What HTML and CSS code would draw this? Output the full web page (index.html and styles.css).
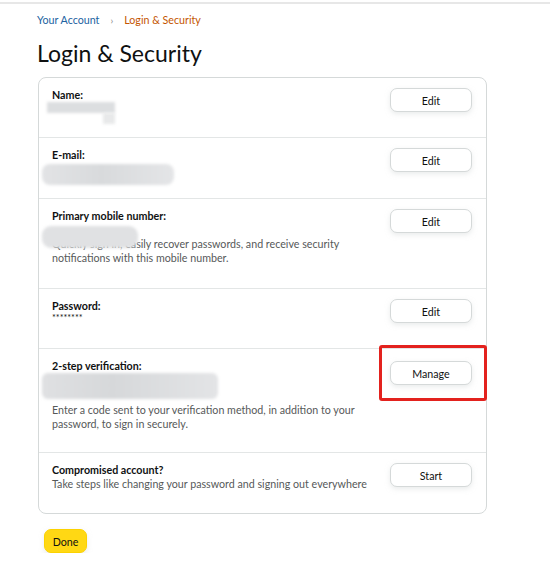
FILE: index.html
```html
<!DOCTYPE html>
<html lang="en">
<head>
<meta charset="utf-8">
<title>Login &amp; Security</title>
<link rel="stylesheet" href="styles.css">
</head>
<body>
<div class="topline"></div>
<main class="page">
  <nav class="crumbs">
    <a class="crumb-link" href="#">Your Account</a>
    <span class="crumb-sep">›</span>
    <span class="crumb-current">Login &amp; Security</span>
  </nav>
  <h1 class="title">Login &amp; Security</h1>

  <section class="card">
    <div class="row row-name">
      <div class="info">
        <div class="label">Name:</div>
        <div class="blur blur-name"></div>
        <div class="blur blur-name2"></div>
      </div>
      <button class="btn">Edit</button>
    </div>

    <div class="row row-email">
      <div class="info">
        <div class="label">E-mail:</div>
        <div class="blur blur-email"></div>
      </div>
      <button class="btn">Edit</button>
    </div>

    <div class="row row-mobile">
      <div class="info">
        <div class="label">Primary mobile number:</div>
        <div class="blur blur-mobile"></div>
        <p class="desc">Quickly sign in, easily recover passwords, and receive security notifications with this mobile number.</p>
      </div>
      <button class="btn">Edit</button>
    </div>

    <div class="row row-password">
      <div class="info">
        <div class="label">Password:</div>
        <div class="stars">********</div>
      </div>
      <button class="btn">Edit</button>
    </div>

    <div class="row row-2sv">
      <div class="info">
        <div class="label">2-step verification:</div>
        <div class="blur blur-2sv"></div>
        <p class="desc">Enter a code sent to your verification method, in addition to your password, to sign in securely.</p>
      </div>
      <button class="btn">Manage</button>
      <div class="highlight"></div>
    </div>

    <div class="row row-comp">
      <div class="info">
        <div class="label">Compromised account?</div>
        <p class="desc">Take steps like changing your password and signing out everywhere</p>
      </div>
      <button class="btn">Start</button>
    </div>
  </section>

  <button class="done">Done</button>
</main>
</body>
</html>
```

FILE: styles.css
```css
* { box-sizing: border-box; }

body {
  margin: 0;
  background: #fff;
  color: #0f1111;
  font-family: Lato, "Noto Sans", sans-serif;
  font-size: 10.7px;
  line-height: 14px;
}

.topline {
  margin-top: 2px;
  height: 2px;
  background: #e7e7e7;
}

.page {
  padding: 9px 0 0 37px;
  width: 487px;
}

.crumbs {
  display: flex;
  align-items: center;
  gap: 11px;
  line-height: 14px;
}

.crumb-link { color: #2162a1; text-decoration: none; }
.crumb-sep { color: #888; font-size: 10px; }
.crumb-current { color: #c45500; }

.title {
  margin: 11px 0 9px;
  font-size: 23px;
  line-height: 30px;
  font-weight: 400;
  color: #0f1111;
}

.card {
  margin-left: 1px;
  border: 1px solid #d5d9d9;
  border-radius: 8px;
}

.row {
  position: relative;
  display: flex;
  justify-content: space-between;
  align-items: flex-start;
  padding: 10px 14px 10px 13px;
  border-bottom: 1px solid #e3e6e6;
}
.row:last-child { border-bottom: none; }

.row-name { height: 60px; }
.row-email { height: 61px; }
.row-mobile { height: 90px; }
.row-password { height: 60px; }
.row-2sv { height: 104px; }
.row-comp { height: 60px; }

.info { flex: 1; padding-right: 12px; }

.label {
  font-weight: 700;
  line-height: 14px;
}

.desc {
  margin: 0;
  color: #565959;
  line-height: 14px;
}

.stars {
  font-size: 9px;
  line-height: 10px;
  color: #0f1111;
}

.blur {
  background: #dcdee0;
  filter: blur(1.5px);
}
.blur-name { width: 68px; height: 11px; margin: 0 0 0 -5px; }
.blur-name2 { width: 12px; height: 11px; margin: 0 0 0 51px; background: #e8e9ea; }
.blur-email { width: 132px; height: 21px; margin: 2px 0 0 -10px; background: linear-gradient(90deg, #e2e3e5 0, #d8dadc 45%, #e4e5e7 100%); border-radius: 8px; }
.blur-mobile { width: 96px; height: 22px; margin: 3px 0 -11px -10px; position: relative; border-radius: 9px; background: #e0e1e3; }
.blur-2sv { width: 176px; height: 26px; margin: 0 0 4px -10px; background: linear-gradient(90deg, #dfe0e2 0, #d6d8da 40%, #e3e4e6 100%); border-radius: 6px; }

.btn {
  flex: none;
  width: 82px;
  height: 24px;
  background: #fff;
  border: 1px solid #d5d9d9;
  border-radius: 7px;
  box-shadow: 0 2px 5px rgba(213, 217, 217, .5);
  font-family: inherit;
  font-size: 10.7px;
  color: #0f1111;
  padding: 0;
}

.row-2sv .btn { margin-top: 2px; }

.highlight {
  position: absolute;
  top: -4px;
  right: -1px;
  width: 108px;
  height: 56px;
  border: 3px solid #e3221e;
  border-radius: 3px;
}

.done {
  margin: 15px 0 0 7px;
  width: 43px;
  height: 24px;
  background: #ffd814;
  border: 1px solid #fcd200;
  border-radius: 7px;
  box-shadow: 0 2px 5px rgba(213, 217, 217, .5);
  font-family: inherit;
  font-size: 10.7px;
  color: #0f1111;
  padding: 0;
}
```
